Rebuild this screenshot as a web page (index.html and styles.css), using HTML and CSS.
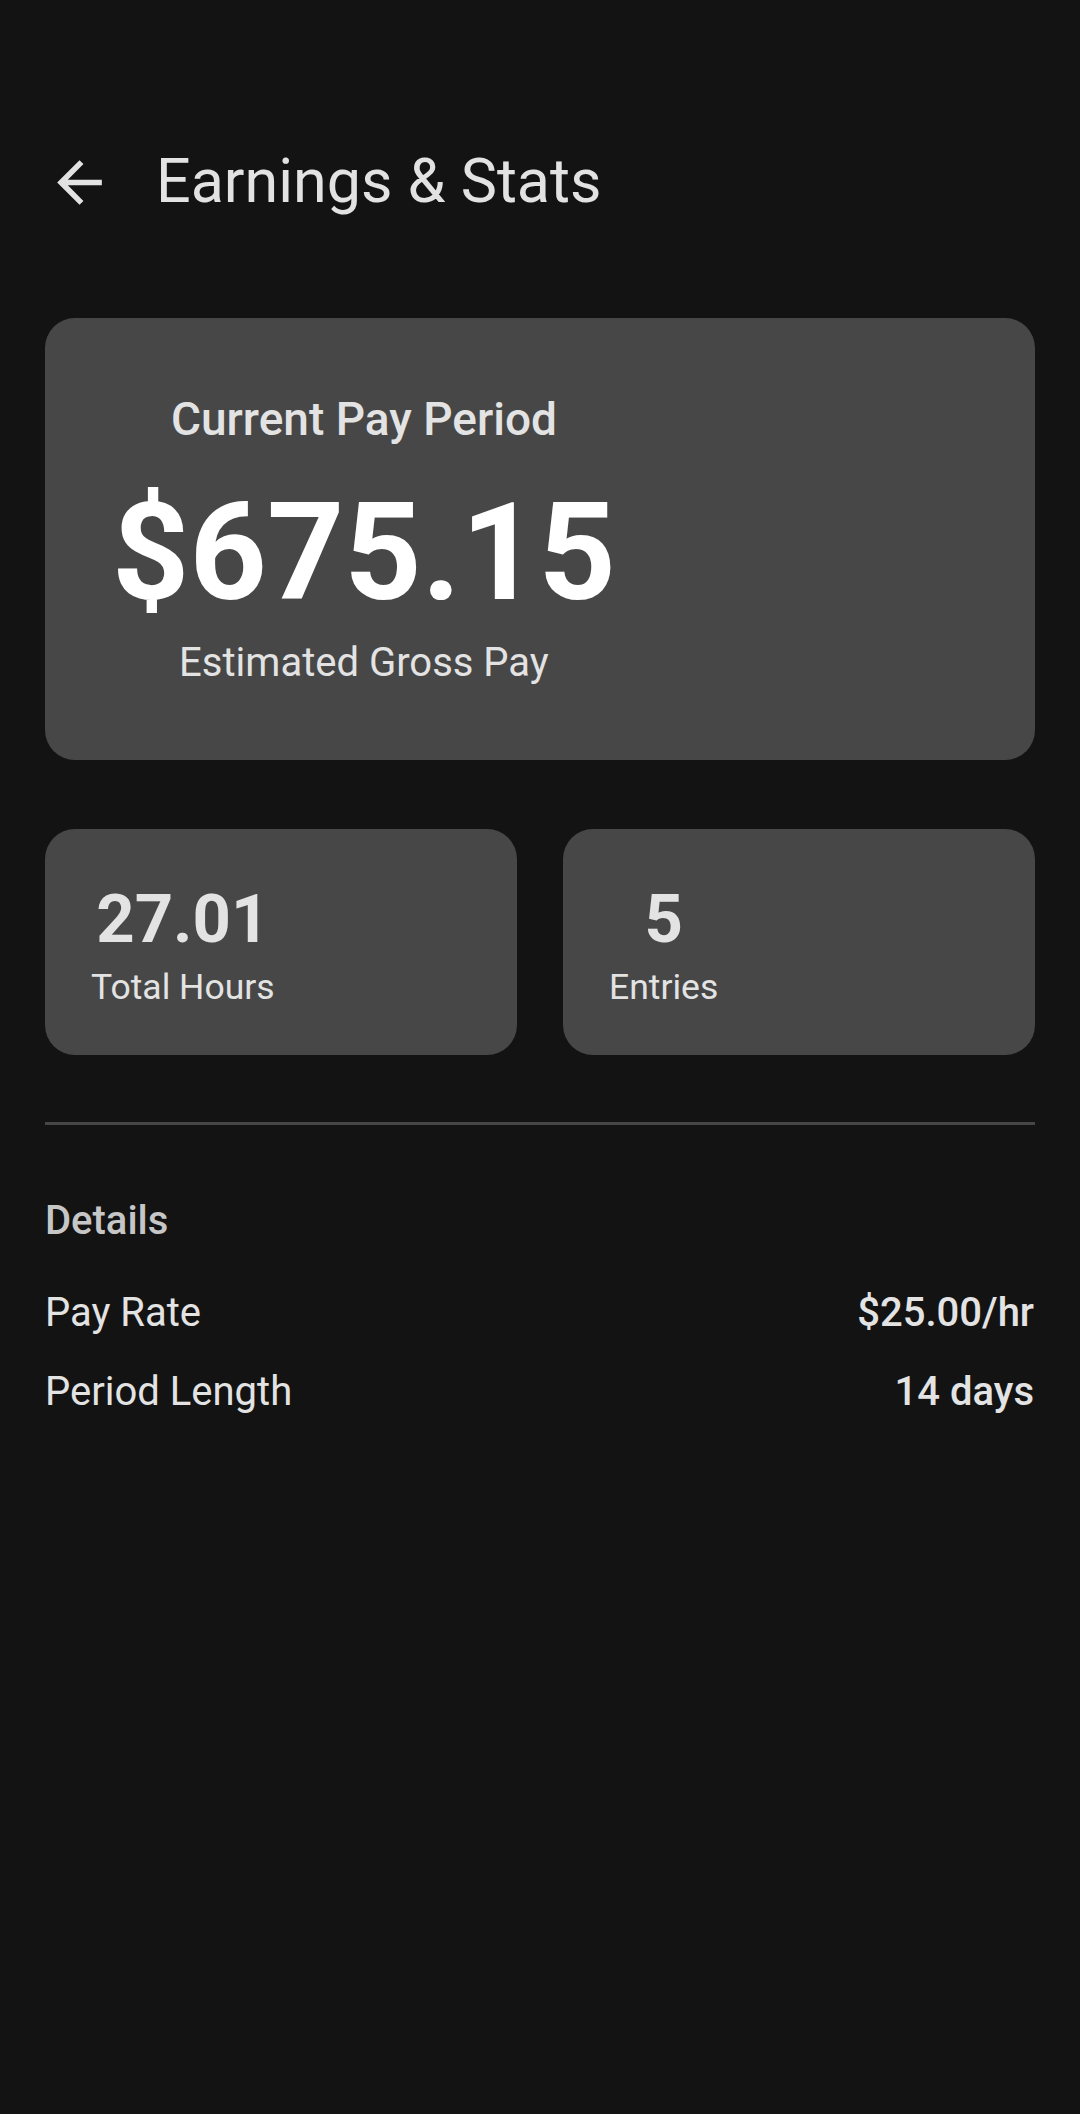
FILE: index.html
```html
<!doctype html>
<html>
<head>
    <meta charset="utf-8" />
    <title>Earnings &amp; Stats</title>
    <link rel="stylesheet" href="styles.css">
</head>
<body>
<div class="header">
    <svg class="back" viewBox="0 0 24 24" width="67" height="67">
        <path d="M20 11H7.83l5.59-5.59L12 4l-8 8 8 8 1.41-1.41L7.83 13H20v-2z" fill="#e2e2e2"/>
    </svg>
    <h1 class="title">Earnings &amp; Stats</h1>
</div>

<div class="content">
    <div class="period-card">
        <div class="period-col">
            <p class="period-label">Current Pay Period</p>
            <p class="period-amount">$675.15</p>
            <p class="period-sub">Estimated Gross Pay</p>
        </div>
    </div>

    <div class="stats">
        <div class="stat-card">
            <div class="stat-col">
                <p class="stat-value">27.01</p>
                <p class="stat-label">Total Hours</p>
            </div>
        </div>
        <div class="stat-card">
            <div class="stat-col">
                <p class="stat-value">5</p>
                <p class="stat-label">Entries</p>
            </div>
        </div>
    </div>

    <div class="divider"></div>

    <p class="section-title">Details</p>
    <div class="row row-first">
        <span class="row-name">Pay Rate</span>
        <span class="row-value">$25.00/hr</span>
    </div>
    <div class="row">
        <span class="row-name">Period Length</span>
        <span class="row-value">14 days</span>
    </div>
</div>
</body>
</html>
```

FILE: styles.css
```css
*{
    margin:0px;
    padding:0px;
    box-sizing:border-box;
}
html,body{
    width:100%;
    min-height:100%;
    background-color:#131313;
    font-family:Roboto,"Noto Sans",sans-serif;
    color:#e3e3e3;
}
p{
    line-height:1.2;
}
.header{
    display:flex;
    align-items:center;
    height:76px;
    margin-top:144px;
    padding-left:46px;
}
.header .back{
    display:block;
    flex-shrink:0;
}
.header .title{
    margin-left:43px;
    font-size:61px;
    font-weight:400;
    line-height:1.2;
    color:#e2e2e2;
}
.content{
    padding:98px 45px 0px 45px;
}
/* big card */
.period-card{
    background-color:#474747;
    border-radius:30px;
    padding:75px 0px 73px 67px;
}
.period-col{
    display:inline-flex;
    flex-direction:column;
    align-items:center;
}
.period-label{
    font-size:46px;
    font-weight:500;
    line-height:53px;
    color:#e3e3e3;
}
.period-amount{
    margin-top:26px;
    font-size:135px;
    font-weight:700;
    color:#ffffff;
}
.period-sub{
    margin-top:5px;
    font-size:40px;
    color:#e3e3e3;
}
/* small cards */
.stats{
    display:grid;
    grid-template-columns:1fr 1fr;
    gap:46px;
    margin-top:69px;
}
.stat-card{
    background-color:#474747;
    border-radius:30px;
    padding:49px 0px 47px 46px;
}
.stat-col{
    display:inline-flex;
    flex-direction:column;
    align-items:center;
}
.stat-value{
    font-size:67px;
    font-weight:700;
    line-height:82px;
    color:#e3e3e3;
}
.stat-label{
    margin-top:7px;
    font-size:35.5px;
    line-height:41px;
    color:#e3e3e3;
}
.divider{
    height:3px;
    background-color:#464646;
    margin-top:67px;
}
.section-title{
    margin-top:72px;
    font-size:40px;
    font-weight:500;
    color:#c6c6c6;
}
.row{
    display:flex;
    justify-content:space-between;
    font-size:40px;
    line-height:1.2;
    margin-top:31px;
    padding-right:1px;
}
.row-first{
    margin-top:44px;
}
.row-name{
    color:#e3e3e3;
}
.row-value{
    font-weight:500;
    color:#e3e3e3;
}
```
